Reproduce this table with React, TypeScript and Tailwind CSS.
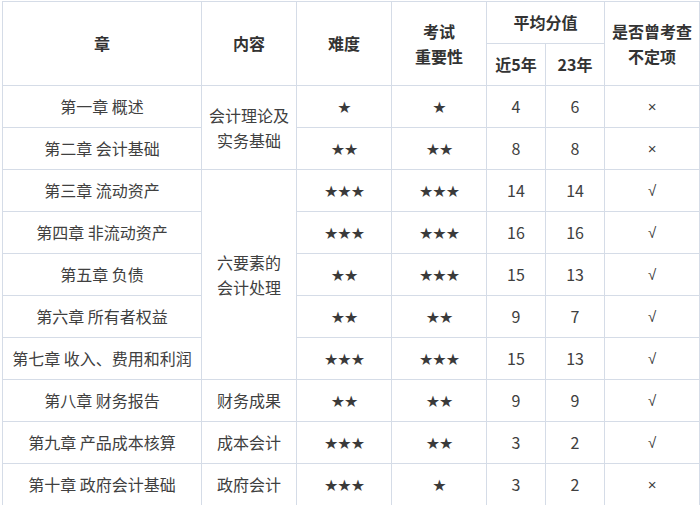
const rows = [
  { ch: "第一章 概述", diff: 1, imp: 1, y5: 4, y23: 6, ok: false },
  { ch: "第二章 会计基础", diff: 2, imp: 2, y5: 8, y23: 8, ok: false },
  { ch: "第三章 流动资产", diff: 3, imp: 3, y5: 14, y23: 14, ok: true },
  { ch: "第四章 非流动资产", diff: 3, imp: 3, y5: 16, y23: 16, ok: true },
  { ch: "第五章 负债", diff: 2, imp: 3, y5: 15, y23: 13, ok: true },
  { ch: "第六章 所有者权益", diff: 2, imp: 2, y5: 9, y23: 7, ok: true },
  { ch: "第七章 收入、费用和利润", diff: 3, imp: 3, y5: 15, y23: 13, ok: true },
  { ch: "第八章 财务报告", diff: 2, imp: 2, y5: 9, y23: 9, ok: true },
  { ch: "第九章 产品成本核算", diff: 3, imp: 2, y5: 3, y23: 2, ok: true },
  { ch: "第十章 政府会计基础", diff: 3, imp: 1, y5: 3, y23: 2, ok: false },
];

// content column spans: start index -> [rowSpan, lines]
const content: Record<number, [number, string[]]> = {
  0: [2, ["会计理论及", "实务基础"]],
  2: [5, ["六要素的", "会计处理"]],
  7: [1, ["财务成果"]],
  8: [1, ["成本会计"]],
  9: [1, ["政府会计"]],
};

const cell = "border border-[#d5dce7] text-center align-middle p-0";
const star = "font-['DejaVu_Sans'] text-[16px] text-[#3a3a3a] tracking-[-1px]";

function Stars({ n }: { n: number }) {
  return <span className={star}>{"★".repeat(n)}</span>;
}

export default function App() {
  return (
    <div className="w-[700px] h-[505px] bg-white pl-[2px] pt-[1px] font-['Noto_Sans_CJK_SC',sans-serif] text-[16px] text-[#404040]">
      <table className="w-[697px] table-fixed border-collapse">
        <colgroup>
          <col className="w-[199px]" />
          <col className="w-[95px]" />
          <col className="w-[95px]" />
          <col className="w-[95px]" />
          <col className="w-[59px]" />
          <col className="w-[59px]" />
          <col className="w-[95px]" />
        </colgroup>
        <thead className="font-bold text-[16px] text-[#333] leading-[25px]">
          <tr className="h-[42px]">
            <th rowSpan={2} className={cell}>章</th>
            <th rowSpan={2} className={cell}>内容</th>
            <th rowSpan={2} className={cell}>难度</th>
            <th rowSpan={2} className={cell}>
              考试
              <br />
              重要性
            </th>
            <th colSpan={2} className={cell}>平均分值</th>
            <th rowSpan={2} className={cell}>
              是否曾考查
              <br />
              不定项
            </th>
          </tr>
          <tr className="h-[42px]">
            <th className={cell}>近5年</th>
            <th className={cell}>23年</th>
          </tr>
        </thead>
        <tbody className="leading-[25px]">
          {rows.map((r, i) => (
            <tr key={r.ch} className="h-[42px]">
              <td className={cell}>{r.ch}</td>
              {content[i] && (
                <td rowSpan={content[i][0]} className={cell}>
                  {content[i][1].map((l, k) => (
                    <div key={k}>{l}</div>
                  ))}
                </td>
              )}
              <td className={cell}>
                <Stars n={r.diff} />
              </td>
              <td className={cell}>
                <Stars n={r.imp} />
              </td>
              <td className={cell}>{r.y5}</td>
              <td className={cell}>{r.y23}</td>
              <td className={`${cell} font-['Liberation_Sans'] text-[15px]`}>{r.ok ? "√" : "×"}</td>
            </tr>
          ))}
        </tbody>
      </table>
    </div>
  );
}
